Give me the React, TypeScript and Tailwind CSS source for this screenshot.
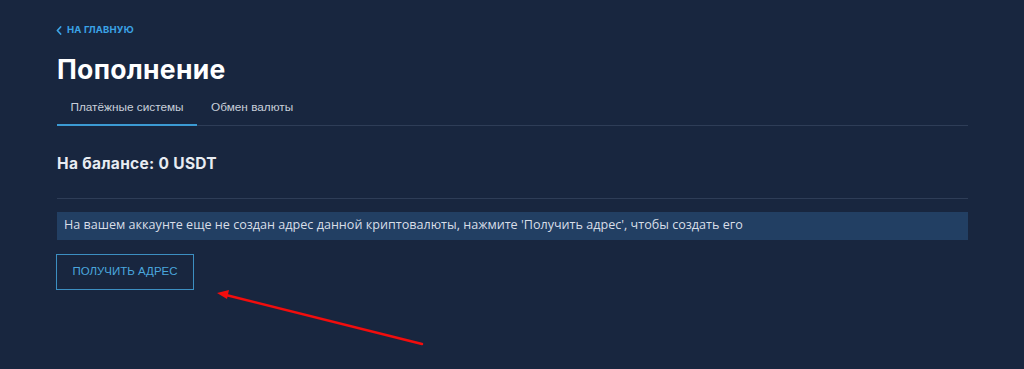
import React from "react";

export default function App() {
  return (
    <div className="relative h-[369px] w-full overflow-hidden bg-[#18263f]">
      <div className="w-[911px] ml-[57px] pt-[24px]">
        {/* back link */}
        <a className="flex items-center gap-[5px] text-[#3ba3e6] text-[9.5px] font-bold uppercase tracking-[0.2px] h-[12px] -ml-[1px]" style={{ fontFamily: "Inter, sans-serif" }}>
          <svg width="6" height="9" viewBox="0 0 6 9" fill="none">
            <path d="M4.6 1 L1.4 4.5 L4.6 8" stroke="#3ba3e6" strokeWidth="1.7" strokeLinecap="round" strokeLinejoin="round" />
          </svg>
          На главную
        </a>

        <h1 className="mt-[18px] text-white text-[26.5px] font-bold leading-[30px] tracking-[0.3px]" style={{ fontFamily: "Inter, sans-serif" }}>
          Пополнение
        </h1>

        {/* tabs */}
        <div className="mt-[7px] flex border-b border-[#2e3d57] text-[11.8px] text-[#c9d0db]" style={{ fontFamily: "'Liberation Sans', Arial, sans-serif" }}>
          <div className="w-[140px] text-center pt-[8px] pb-[7px] border-b-2 border-[#3b9ad3] -mb-px">Платёжные системы</div>
          <div className="px-[14px] pt-[8px] pb-[7px]">Обмен валюты</div>
        </div>

        <div className="mt-[28px] text-[15.5px] font-bold text-[#e8ecf2] leading-[20px] tracking-[0.3px]" style={{ fontFamily: "Inter, sans-serif" }}>
          На балансе: 0 USDT
        </div>

        <div className="mt-[24px] border-t border-[#2e3d57]" />

        <div className="mt-[13px] h-[28px] bg-[#223f63] px-[7px] flex items-center text-[12.6px] text-[#d8dee8]" style={{ fontFamily: "'Open Sans', sans-serif" }}>
          На вашем аккаунте еще не создан адрес данной криптовалюты, нажмите 'Получить адрес', чтобы создать его
        </div>

        <button className="mt-[14px] -ml-[1px] w-[138px] h-[36px] border border-[#3c8fc2] text-[#4aa6de] text-[11.5px] uppercase" style={{ fontFamily: "'Liberation Sans', Arial, sans-serif" }}>
          Получить адрес
        </button>
      </div>

      {/* red annotation arrow */}
      <svg className="absolute left-0 top-0" width="1024" height="369" viewBox="0 0 1024 369">
        <line x1="422" y1="344" x2="226" y2="295" stroke="#f20d0d" strokeWidth="2.5" strokeLinecap="round" />
        <path d="M217 293 L229 290 L227 299 Z" fill="#f20d0d" />
      </svg>
    </div>
  );
}
